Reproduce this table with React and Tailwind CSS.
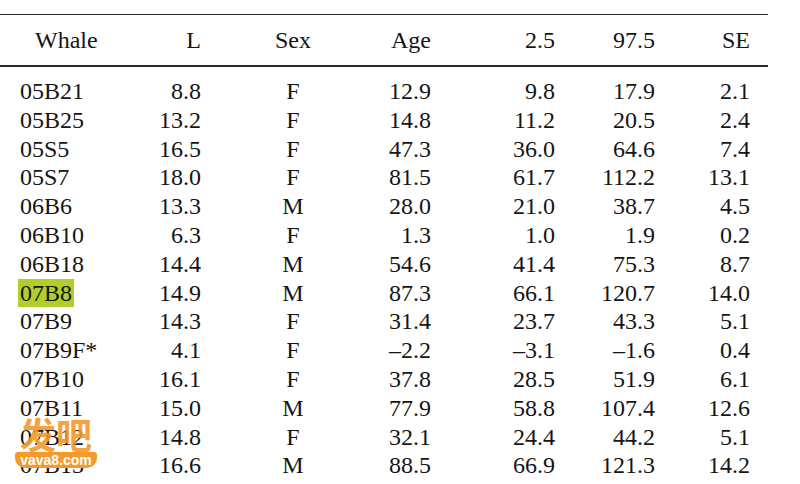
import React from 'react';

const rows = [
  ['05B21', '8.8', 'F', '12.9', '9.8', '17.9', '2.1'],
  ['05B25', '13.2', 'F', '14.8', '11.2', '20.5', '2.4'],
  ['05S5', '16.5', 'F', '47.3', '36.0', '64.6', '7.4'],
  ['05S7', '18.0', 'F', '81.5', '61.7', '112.2', '13.1'],
  ['06B6', '13.3', 'M', '28.0', '21.0', '38.7', '4.5'],
  ['06B10', '6.3', 'F', '1.3', '1.0', '1.9', '0.2'],
  ['06B18', '14.4', 'M', '54.6', '41.4', '75.3', '8.7'],
  ['07B8', '14.9', 'M', '87.3', '66.1', '120.7', '14.0'],
  ['07B9', '14.3', 'F', '31.4', '23.7', '43.3', '5.1'],
  ['07B9F*', '4.1', 'F', '\u20132.2', '\u20133.1', '\u20131.6', '0.4'],
  ['07B10', '16.1', 'F', '37.8', '28.5', '51.9', '6.1'],
  ['07B11', '15.0', 'M', '77.9', '58.8', '107.4', '12.6'],
  ['07B12', '14.8', 'F', '32.1', '24.4', '44.2', '5.1'],
  ['07B13', '16.6', 'M', '88.5', '66.9', '121.3', '14.2'],
];

const grid = 'grid grid-cols-[140px_61px_184px_46px_124px_100px_95px] whitespace-nowrap';

const App = () => {
  return (
    <div className="relative w-[800px] h-[484px] overflow-hidden bg-white text-[#151515] text-[24px]">
      <div className="w-[768px] pt-[14px] font-['Liberation_Serif','Times_New_Roman',serif]">
        {/* header */}
        <div className={`${grid} h-[53px] items-center border-t border-b-2 border-[#2a2a2a]`}>
          <div className="pl-[35px]">Whale</div>
          <div className="text-right">L</div>
          <div className="text-center">Sex</div>
          <div className="text-right">Age</div>
          <div className="text-right">2.5</div>
          <div className="text-right">97.5</div>
          <div className="text-right">SE</div>
        </div>

        <div className="pt-[10px]">
          {rows.map((r) => (
            <div key={r[0]} className={`${grid} h-[28.8px] leading-[28.8px]`}>
              <div className="pl-[20px]">
                {r[0] === '07B8' ? (
                  <span className="bg-[#b1cf2b] px-[2px] -ml-[2px] py-[1px]">{r[0]}</span>
                ) : (
                  r[0]
                )}
              </div>
              <div className="text-right">{r[1]}</div>
              <div className="text-center">{r[2]}</div>
              <div className="text-right">{r[3]}</div>
              <div className="text-right">{r[4]}</div>
              <div className="text-right">{r[5]}</div>
              <div className="text-right">{r[6]}</div>
            </div>
          ))}
        </div>
      </div>

      {/* watermark */}
      <div className="absolute left-[15px] top-[414px] w-[82px] flex flex-col items-center">
        <span className="text-[36px] leading-[38px] font-bold text-[#f39a2b] opacity-90 font-['Noto_Sans_CJK_SC',sans-serif]">
          发吧
        </span>
        <span className="w-full text-center rounded-b-[10px] rounded-t-[3px] bg-[#f39a2b] text-[14px] leading-[16px] font-bold text-white font-['Liberation_Sans',sans-serif]">
          vava8.com
        </span>
      </div>
    </div>
  );
};

export default App;
